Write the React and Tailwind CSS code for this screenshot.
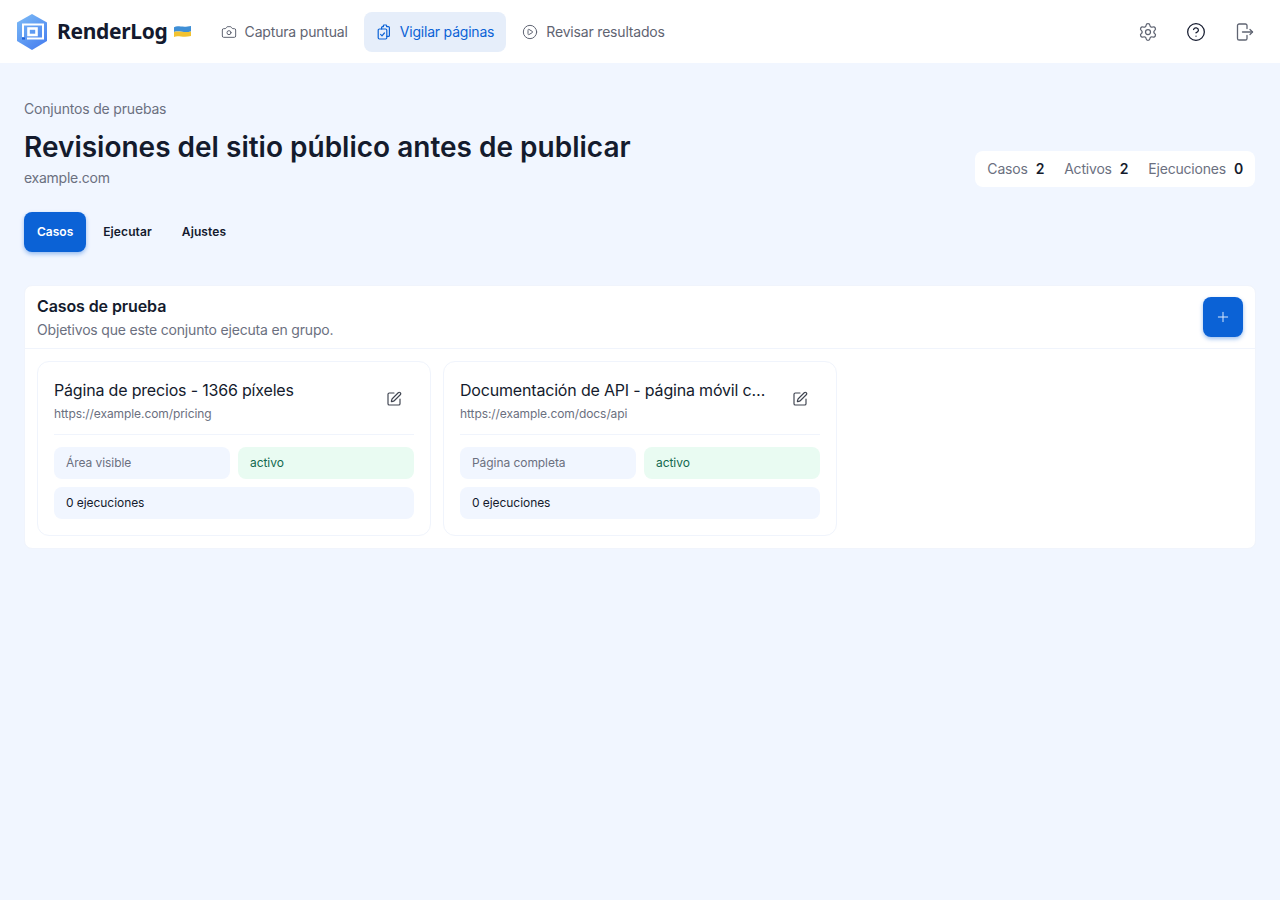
import { Camera, CirclePlay, Settings, CircleHelp, SquarePen, Plus } from 'lucide-react'

function Logo() {
  return (
    <svg width="32" height="36" viewBox="0 0 32 36" className="shrink-0">
      <defs>
        <linearGradient id="hex" x1="0" y1="0" x2="0.7" y2="1">
          <stop offset="0" stopColor="#7dbcf6" />
          <stop offset="1" stopColor="#4a82f0" />
        </linearGradient>
      </defs>
      <path d="M16 0 L31 8.5 V27 L16 36 L1 27 V8.5 Z" fill="url(#hex)" />
      <path d="M7 23 V10.5 H27 V24.5 H11" fill="none" stroke="#fff" strokeWidth="2" />
      <path d="M6 24.5 H9" fill="none" stroke="#1f5fd6" strokeWidth="2" />
      <rect x="12.5" y="14.5" width="8" height="6.5" fill="none" stroke="#fff" strokeWidth="2.6" />
    </svg>
  )
}

function Flag() {
  return (
    <svg width="17" height="13" viewBox="0 0 17 13" className="shrink-0">
      <path d="M0 2.2 C4 0 8 3 17 1 V6.5 C10 8 5 5.5 0 7 Z" fill="#3f8fd6" />
      <path d="M0 7 C5 5.5 10 8 17 6.5 V11 C9 13 4 10 0 12 Z" fill="#f2c230" />
    </svg>
  )
}

function ClipboardsIcon({ className }) {
  return (
    <svg viewBox="0 0 16 16" fill="none" stroke="currentColor" strokeWidth="1.2" strokeLinecap="round" strokeLinejoin="round" className={className}>
      <rect x="2.2" y="5" width="8.6" height="10" rx="1.2" />
      <path d="M4.6 10.4 L6 11.8 L8.4 9" />
      <path d="M5.6 5 V3.6 C5.6 3 6 2.6 6.6 2.6 H7.4 V1.6 C7.4 1.2 7.7 1 8 1 H10 C10.3 1 10.6 1.2 10.6 1.6 V2.6 H12.4 C13 2.6 13.4 3 13.4 3.6 V11.4 C13.4 12 13 12.4 12.4 12.4 H10.8" />
    </svg>
  )
}

function DoorIcon({ className }) {
  return (
    <svg viewBox="0 0 18 18" fill="none" stroke="currentColor" strokeWidth="1.3" strokeLinecap="round" strokeLinejoin="round" className={className}>
      <path d="M11 5.5 V2.6 C11 1.7 10.3 1 9.4 1 H3.2 C2.2 1 1.5 1.7 1.5 2.6 V15.4 C1.5 16.3 2.2 17 3.2 17 H9.4 C10.3 17 11 16.3 11 15.4 V12.5" />
      <path d="M6.5 9 H16.5" />
      <path d="M14 6.5 L16.5 9 L14 11.5" />
    </svg>
  )
}

function NavItem({ icon: Icon, label, active }) {
  return (
    <a
      className={
        active
          ? 'flex h-10 items-center gap-2 rounded-lg bg-[#e6eefa] px-3 text-sm tracking-[-0.2px] text-[#0b62d6]'
          : 'flex h-10 items-center gap-2 rounded-lg px-3 text-sm tracking-[-0.18px] text-[#5f6472]'
      }
    >
      <Icon className="h-4 w-4 shrink-0" strokeWidth={1.5} />
      {label}
    </a>
  )
}

function Stat({ label, value }) {
  return (
    <div className="flex items-center gap-2">
      <span className="text-[#6b7080]">{label}</span>
      <span className="font-semibold text-[#141b2d]">{value}</span>
    </div>
  )
}

function CaseCard({ title, url, mode }) {
  return (
    <div className="rounded-xl border border-[#f0f4fc] bg-white p-4">
      <div className="flex items-center justify-between gap-3 border-b border-[#f0f4fc] pb-3">
        <div className="min-w-0">
          <p className="truncate text-base leading-6 tracking-[-0.18px] text-[#141b2d]">{title}</p>
          <p className="mt-1 truncate text-xs leading-4 tracking-[-0.08px] text-[#6b7080]">{url}</p>
        </div>
        <button type="button" className="mb-0.5 flex h-10 w-10 shrink-0 items-center justify-center text-[#3f4450]">
          <SquarePen className="h-4 w-4" strokeWidth={1.75} />
        </button>
      </div>
      <div className="mt-3 grid grid-cols-2 gap-2 text-xs tracking-[-0.06px]">
        <div className="flex h-8 items-center rounded-lg bg-[#f1f6ff] px-3 text-[#6b7080]">{mode}</div>
        <div className="flex h-8 items-center rounded-lg bg-[#e9fbf2] px-3 text-[#12694f]">activo</div>
        <div className="col-span-2 flex h-8 items-center rounded-lg bg-[#f1f6ff] px-3 text-[#141b2d]">0 ejecuciones</div>
      </div>
    </div>
  )
}

export default function App() {
  return (
    <div className="min-h-[900px] bg-[#f1f6ff] font-['Inter',sans-serif]">
      <header className="flex h-[63px] items-center justify-between bg-white pl-4 pr-[15px]">
        <div className="flex items-center">
          <Logo />
          <span className="ml-[9px] font-['Noto_Sans',sans-serif] text-[21px] font-bold tracking-[-0.3px] text-[#141a2e]">RenderLog</span>
          <span className="ml-1.5"><Flag /></span>
          <nav className="ml-[18px] flex items-center gap-1">
            <NavItem icon={Camera} label="Captura puntual" />
            <NavItem icon={ClipboardsIcon} label="Vigilar páginas" active />
            <NavItem icon={CirclePlay} label="Revisar resultados" />
          </nav>
        </div>
        <div className="flex items-center gap-2">
          <button type="button" className="flex h-10 w-10 items-center justify-center text-[#5f6472]">
            <Settings className="h-5 w-5" strokeWidth={1.5} />
          </button>
          <button type="button" className="flex h-10 w-10 items-center justify-center text-[#141a2e]">
            <CircleHelp className="h-5 w-5" strokeWidth={1.5} />
          </button>
          <button type="button" className="ml-px flex h-10 w-10 items-center justify-center text-[#5f6472]">
            <DoorIcon className="h-[18px] w-[18px]" />
          </button>
        </div>
      </header>

      <main className="px-6 pt-9">
        <div className="flex items-end justify-between">
          <div>
            <p className="text-sm leading-5 tracking-[-0.18px] text-[#6b7080]">Conjuntos de pruebas</p>
            <h1 className="mt-2.5 text-[28px] font-semibold leading-9 text-[#141b2d]">
              Revisiones del sitio público antes de publicar
            </h1>
            <p className="mt-[3px] text-sm leading-5 tracking-[-0.25px] text-[#6b7080]">example.com</p>
          </div>
          <div className="mb-px mr-px flex h-9 items-center gap-5 rounded-lg bg-white px-3 text-sm tracking-[-0.2px]">
            <Stat label="Casos" value="2" />
            <Stat label="Activos" value="2" />
            <Stat label="Ejecuciones" value="0" />
          </div>
        </div>

        <div className="mt-6 flex items-center gap-1 text-xs font-semibold text-[#141a2e]">
          <button type="button" className="h-10 rounded-lg bg-[#0b62d6] px-[13px] font-semibold text-white shadow-[0_2px_4px_rgba(11,98,214,0.4)]">
            Casos
          </button>
          <button type="button" className="h-10 px-[13px] font-semibold tracking-[0.1px]">Ejecutar</button>
          <button type="button" className="h-10 px-[13px] font-semibold tracking-[0.1px]">Ajustes</button>
        </div>

        <section className="mt-[33px] rounded-lg border border-[#f0f4fc] bg-white">
          <div className="flex h-[63px] items-center justify-between border-b border-[#f0f4fc] px-3">
            <div>
              <h2 className="text-base font-semibold leading-6 tracking-[-0.1px] text-[#141b2d]">Casos de prueba</h2>
              <p className="mt-0.5 text-sm leading-5 tracking-[-0.18px] text-[#6b7080]">Objetivos que este conjunto ejecuta en grupo.</p>
            </div>
            <button type="button" className="flex h-10 w-10 items-center justify-center rounded-lg bg-[#0b62d6] text-[#dbe8fb] shadow-[0_2px_4px_rgba(11,98,214,0.4)]">
              <Plus className="h-4 w-4" strokeWidth={1.5} />
            </button>
          </div>
          <div className="grid grid-cols-3 gap-3 p-3">
            <CaseCard title="Página de precios - 1366 píxeles" url="https://example.com/pricing" mode="Área visible" />
            <CaseCard title="Documentación de API - página móvil completa" url="https://example.com/docs/api" mode="Página completa" />
          </div>
        </section>
      </main>
    </div>
  )
}
